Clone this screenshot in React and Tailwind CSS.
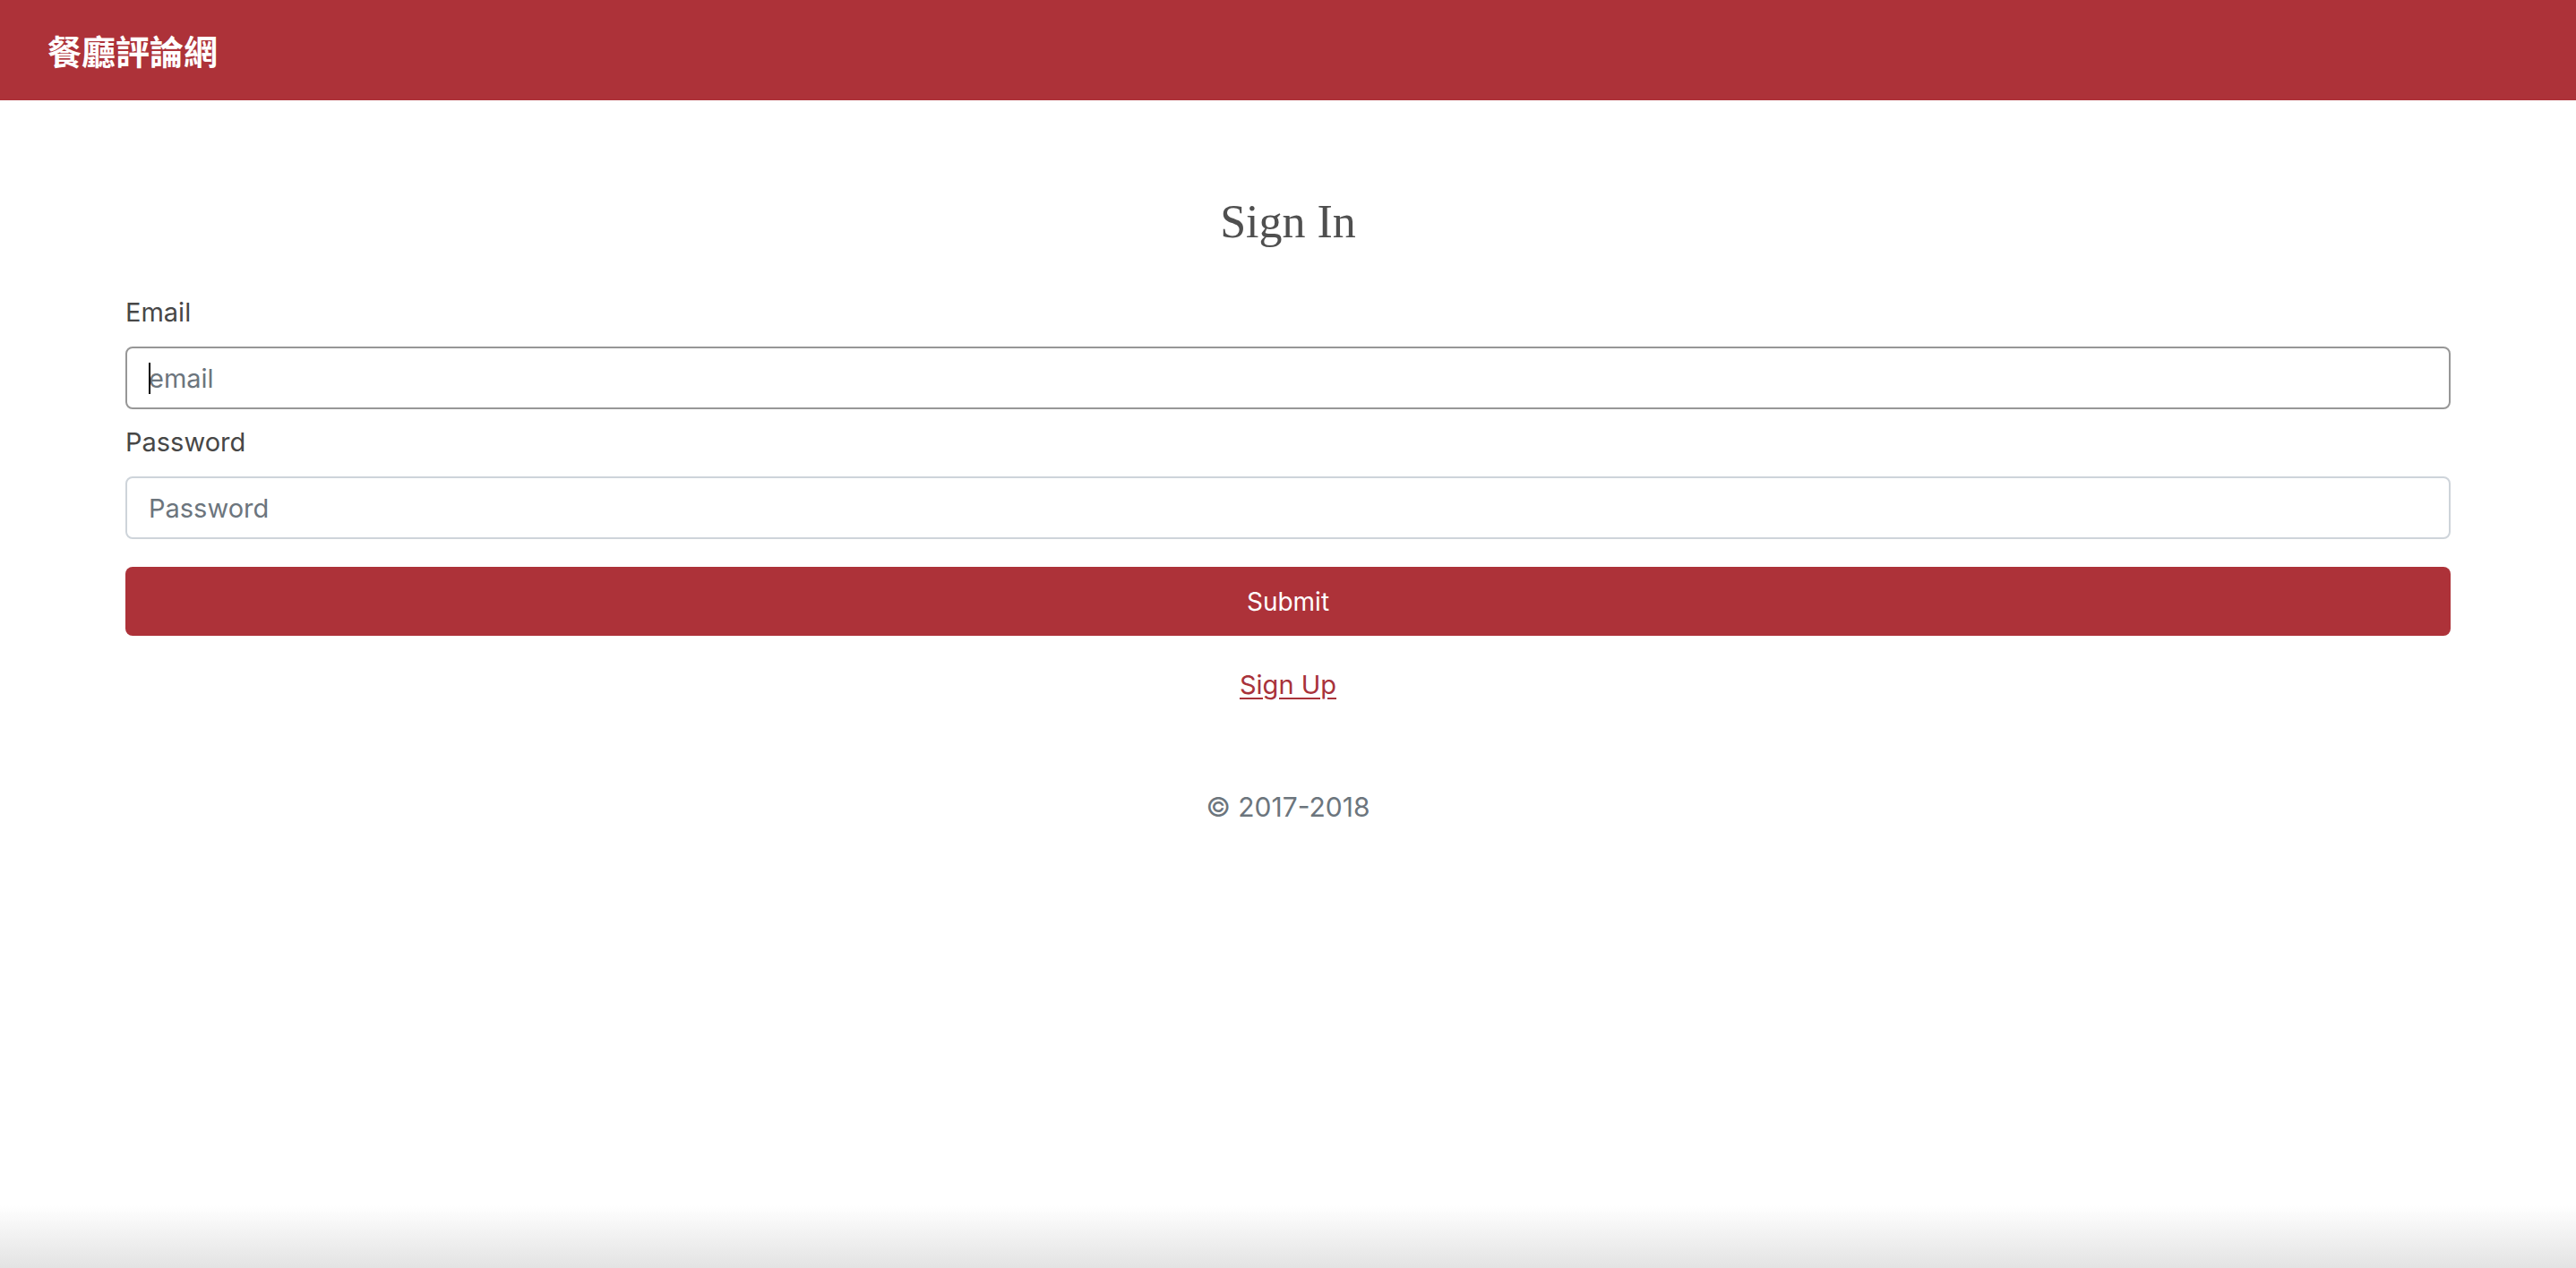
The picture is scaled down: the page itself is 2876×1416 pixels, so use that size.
export default function App() {
  const sans = { fontFamily: 'Inter, "Liberation Sans", sans-serif' }
  return (
    <div className="flex min-h-[1416px] flex-col bg-white" style={sans}>
      <header className="flex h-[112px] items-center bg-[#ad3239] px-[53px]">
        <span
          className="text-[38px] font-bold leading-none text-white"
          style={{ fontFamily: '"Noto Sans CJK TC", "Noto Sans CJK SC", sans-serif' }}
        >
          餐廳評論網
        </span>
      </header>

      <main className="flex-1 px-[140px]">
        <h3
          className="mt-[105px] text-center text-[52px] leading-[61px] text-[#4f4f4f]"
          style={{ fontFamily: '"Liberation Serif", serif' }}
        >
          Sign In
        </h3>

        <form className="mt-[49px]" onSubmit={e => e.preventDefault()}>
          <label className="mb-[16px] block text-[29px] leading-[44px] text-[#474747]">Email</label>
          <div className="relative">
            <input
              type="email"
              placeholder="email"
              className="block h-[70px] w-full rounded-[8px] border-2 border-[#979797] bg-white px-[24px] text-[29px] text-[#495057] outline-none placeholder:text-[#6c757d]"
            />
            <span className="absolute left-[26px] top-[18px] h-[35px] w-[2px] bg-black" />
          </div>

          <label className="mb-[16px] mt-[15px] block text-[29px] leading-[44px] text-[#474747]">Password</label>
          <input
            type="password"
            placeholder="Password"
            className="block h-[70px] w-full rounded-[8px] border-2 border-[#ced4da] bg-white px-[24px] text-[29px] text-[#495057] outline-none placeholder:text-[#6c757d]"
          />

          <button
            type="submit"
            className="mt-[31px] block h-[77px] w-full rounded-[8px] bg-[#ad3239] text-[28px] text-white"
          >
            Submit
          </button>
        </form>

        <div className="mt-[33px] text-center text-[29px] leading-[44px]">
          <a href="#" className="text-[#a8323a] underline underline-offset-[4px]">
            Sign Up
          </a>
        </div>

        <p className="mt-[92px] text-center text-[30px] leading-[44px] text-[#6c757d]">© 2017-2018</p>
      </main>

      <div className="h-[70px] bg-gradient-to-b from-white to-[#e3e3e3]" />
    </div>
  )
}
